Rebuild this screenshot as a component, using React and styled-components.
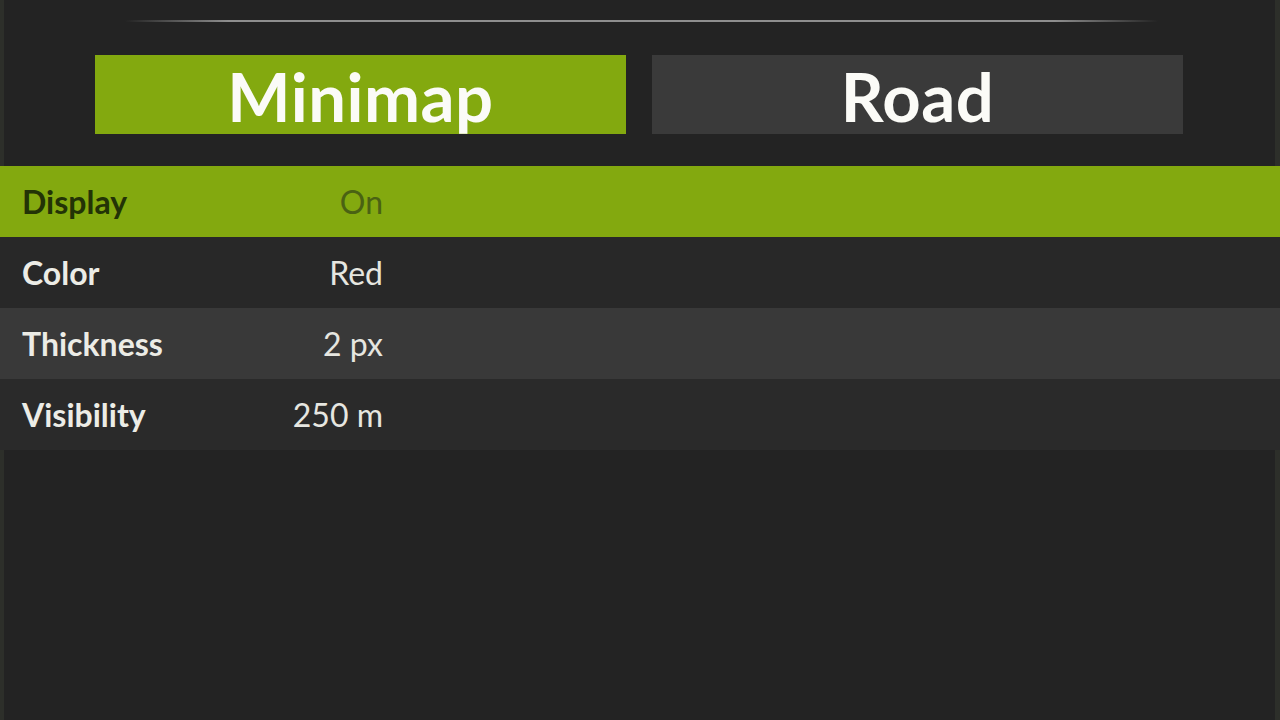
import React from 'react'
import styled, {createGlobalStyle} from 'styled-components'

const Global = createGlobalStyle`
    html, body, #root {
        margin: 0;
        height: 100%;
        overflow: hidden;
    }
    body {
        background: #232323;
        font-family: Lato, "Noto Sans", sans-serif;
    }
`

const Frame = styled.div`
    display: flex;
    flex-direction: column;
    height: 100%;
    background: #232323;
`

const Header = styled.div`
    display: flex;
    flex-direction: column;
    align-items: stretch;
    height: 166px;
    box-sizing: border-box;
    border-left: 4px solid #2d2f2a;
    border-right: 5px solid #2d2f2a;
    padding: 20px 92px 0 91px;
`

const Divider = styled.div`
    height: 2px;
    margin: 0 25px 0 30px;
    background: linear-gradient(90deg, rgba(140,140,140,0) 0%, #8e8e8e 10%, #8e8e8e 90%, rgba(140,140,140,0) 100%);
`

const Tabs = styled.div`
    display: grid;
    grid-template-columns: 1fr 1fr;
    gap: 26px;
    margin-top: 33px;
`

const Tab = styled.div`
    height: 79px;
    display: flex;
    align-items: center;
    justify-content: center;
    background: ${p => p.active ? '#83a90f' : '#3a3a3a'};
    color: #fbfbf7;
    font-size: 67px;
    font-weight: 700;
    letter-spacing: 0.5px;
    line-height: 1;
    padding-top: 4px;
    box-sizing: border-box;
`

const List = styled.div`
    display: flex;
    flex-direction: column;
`

const Row = styled.div`
    height: 71px;
    display: flex;
    align-items: center;
    padding-left: 22px;
    background: ${p => p.bg};
`

const Cell = styled.div`
    width: 361px;
    display: flex;
    justify-content: space-between;
    align-items: center;
    font-size: 32px;
`

const Label = styled.span`
    font-weight: 700;
    color: ${p => p.selected ? '#233306' : '#ecece6'};
`

const Value = styled.span`
    font-weight: 400;
    color: ${p => p.selected ? '#4a6213' : '#e6e6e0'};
`

const Filler = styled.div`
    flex: 1;
    border-left: 4px solid #2d2f2a;
    border-right: 5px solid #2d2f2a;
`

const rows = [
    {label: 'Display', value: 'On', bg: '#83a90f', selected: true},
    {label: 'Color', value: 'Red', bg: '#282828'},
    {label: 'Thickness', value: '2 px', bg: '#393939'},
    {label: 'Visibility', value: '250 m', bg: '#2a2a2a'},
]

export default function App(){
    return <Frame>
        <Global/>
        <Header>
            <Divider/>
            <Tabs>
                <Tab active>Minimap</Tab>
                <Tab>Road</Tab>
            </Tabs>
        </Header>
        <List>
            {rows.map(r =>
                <Row key={r.label} bg={r.bg}>
                    <Cell>
                        <Label selected={r.selected}>{r.label}</Label>
                        <Value selected={r.selected}>{r.value}</Value>
                    </Cell>
                </Row>
            )}
        </List>
        <Filler/>
    </Frame>
}
